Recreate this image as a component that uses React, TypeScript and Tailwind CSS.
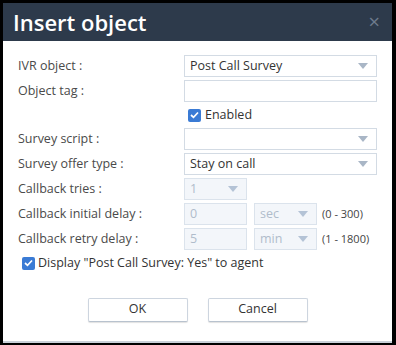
import React from "react";

const font = { fontFamily: '"Open Sans", "Noto Sans", sans-serif' };

function Arrow({ muted = false }: { muted?: boolean }) {
  return (
    <svg width="10" height="6" viewBox="0 0 10 6" className="shrink-0">
      <path d="M0 0 L10 0 L5 6 Z" fill={muted ? "#b4c3d6" : "#a9b6c6"} />
    </svg>
  );
}

function Check() {
  return (
    <span className="flex h-[13px] w-[13px] shrink-0 items-center justify-center rounded-[2px] bg-[#3a7bd5]">
      <svg width="9" height="8" viewBox="0 0 9 8">
        <path d="M1 4 L3.5 6.3 L8 1.5" fill="none" stroke="#fff" strokeWidth="1.7" />
      </svg>
    </span>
  );
}

function Select({ value = "", className = "", disabled = false }: { value?: string; className?: string; disabled?: boolean }) {
  return (
    <div
      className={`flex h-[22px] items-center justify-between border pl-[5px] pr-[8px] text-[12.5px] ${
        disabled ? "border-[#dbe3ec] bg-[#f3f6fa] text-[#b0bccb]" : "border-[#d3dbe4] bg-white text-[#333]"
      } ${className}`}
    >
      <span>{value}</span>
      <Arrow muted={disabled} />
    </div>
  );
}

function Input({ value = "", className = "", disabled = false }: { value?: string; className?: string; disabled?: boolean }) {
  return (
    <div
      className={`flex h-[22px] items-center border pl-[5px] text-[12.5px] ${
        disabled ? "border-[#dbe3ec] bg-[#f3f6fa] text-[#b0bccb]" : "border-[#d3dbe4] bg-white text-[#333]"
      } ${className}`}
    >
      {value}
    </div>
  );
}

function Row({ label, children }: { label?: string; children: React.ReactNode }) {
  return (
    <div className="flex h-[22px] items-center">
      <div className="w-[166px] shrink-0 text-[12.5px] text-[#4a4a4a]">{label}</div>
      <div className="flex items-center">{children}</div>
    </div>
  );
}

export default function App() {
  return (
    <div className="h-[345px] w-[396px] bg-black pl-[3px] pr-[4px] pt-[3px]" style={font}>
      <div className="flex h-[340px] flex-col border-b-[2px] border-[#c9d0d8] bg-white">
        <div className="flex h-[38px] items-center justify-between bg-[#2d3a4b] pl-[10px] pr-[12px]">
          <span className="text-[22px] font-semibold text-white">Insert object</span>
          <span className="text-[20px] leading-none text-[#6e7b8d]">×</span>
        </div>
        <div className="flex flex-col gap-[3px] pl-[15px] pt-[14px]">
          <Row label="IVR object :">
            <Select value="Post Call Survey" className="w-[193px]" />
          </Row>
          <Row label="Object tag :">
            <Input className="w-[193px]" />
          </Row>
          <div className="flex h-[20px] items-center">
            <div className="w-[166px] shrink-0" />
            <label className="flex items-center gap-[4px] pl-[4px] text-[12.5px] text-[#333]">
              <Check />
              Enabled
            </label>
          </div>
          <Row label="Survey script :">
            <Select className="w-[193px]" />
          </Row>
          <Row label="Survey offer type :">
            <Select value="Stay on call" className="w-[193px]" />
          </Row>
          <Row label="Callback tries :">
            <Select value="1" disabled className="w-[63px]" />
          </Row>
          <Row label="Callback initial delay :">
            <Input value="0" disabled className="w-[63px]" />
            <Select value="sec" disabled className="ml-[7px] w-[63px]" />
            <span className="ml-[5px] text-[11px] text-[#444]">(0 - 300)</span>
          </Row>
          <Row label="Callback retry delay :">
            <Input value="5" disabled className="w-[63px]" />
            <Select value="min" disabled className="ml-[7px] w-[63px]" />
            <span className="ml-[5px] text-[11px] text-[#444]">(1 - 1800)</span>
          </Row>
          <label className="mt-[1px] flex items-center gap-[3px] pl-[4px] text-[12.5px] text-[#333]">
            <Check />
            Display "Post Call Survey: Yes" to agent
          </label>
        </div>
        <div className="mt-[25px] flex justify-center gap-[20px]">
          <button className="h-[24px] w-[100px] rounded-[2px] border border-[#cdd5df] border-b-[#b8c2ce] bg-white text-[12.5px] text-[#333] shadow-[0_1px_1px_rgba(0,0,0,0.12)]">
            OK
          </button>
          <button className="h-[24px] w-[100px] rounded-[2px] border border-[#cdd5df] border-b-[#b8c2ce] bg-white text-[12.5px] text-[#333] shadow-[0_1px_1px_rgba(0,0,0,0.12)]">
            Cancel
          </button>
        </div>
      </div>
    </div>
  );
}
